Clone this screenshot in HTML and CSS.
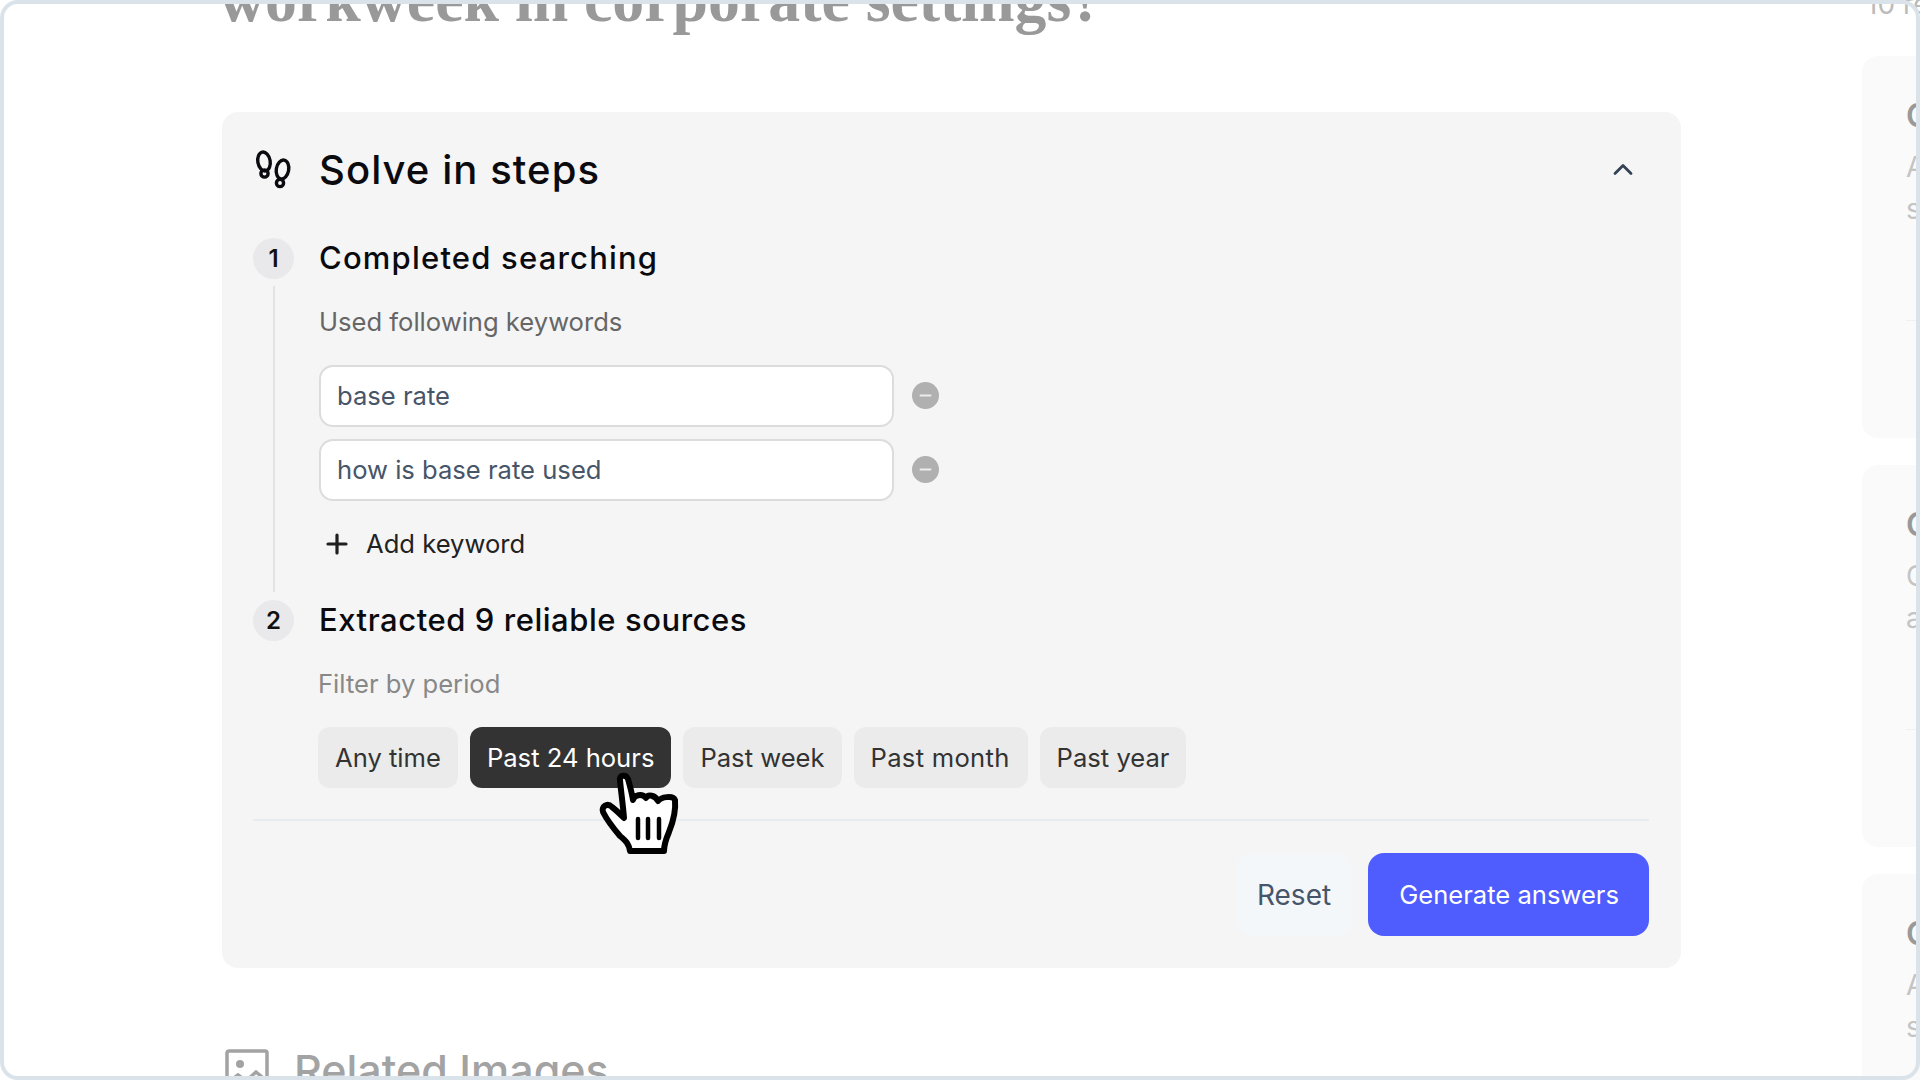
FILE: index.html
```html
<!DOCTYPE html>
<html lang="en">
<head>
<meta charset="utf-8">
<title>Solve in steps</title>
<link rel="stylesheet" href="styles.css">
</head>
<body>
<div class="page">
  <main class="main">
    <h1 class="question">workweek in corporate settings?</h1>
    <section class="card">
      <header class="card-head">
        <svg class="steps-icon" viewBox="0 0 40 40" fill="none" stroke="#0b0b0f" stroke-width="3.400">
          <ellipse cx="11" cy="12.500" rx="6.200" ry="9.500" transform="rotate(-10 11 12.500)"/>
          <circle cx="11.500" cy="24.500" r="3.600"/>
          <ellipse cx="29.500" cy="20.500" rx="6.200" ry="9.500" transform="rotate(10 29.500 20.500)"/>
          <circle cx="27" cy="34" r="3.600"/>
        </svg>
        <h2 class="card-title">Solve in steps</h2>
        <svg class="chevron" viewBox="0 0 22 22" fill="none" stroke="#334155" stroke-width="2.800" stroke-linecap="round" stroke-linejoin="round"><path d="M3 15.500l8-8 8 8"/></svg>
      </header>

      <div class="step step-first">
        <div class="rail"><span class="num">1</span><span class="line"></span></div>
        <div class="step-body">
          <h3 class="step-title step-title-wide">Completed searching</h3>
          <p class="sub">Used following keywords</p>
          <div class="keywords">
            <div class="kw-row">
              <div class="kw-input">base rate</div>
              <svg class="minus" viewBox="0 0 27 27"><circle cx="13.500" cy="13.500" r="13.500" fill="#b0b0b0"/><path d="M8.500 13.500h10" stroke="#ececec" stroke-width="2" stroke-linecap="round"/></svg>
            </div>
            <div class="kw-row">
              <div class="kw-input">how is base rate used</div>
              <svg class="minus" viewBox="0 0 27 27"><circle cx="13.500" cy="13.500" r="13.500" fill="#b0b0b0"/><path d="M8.500 13.500h10" stroke="#ececec" stroke-width="2" stroke-linecap="round"/></svg>
            </div>
          </div>
          <div class="add">
            <svg class="plus" viewBox="0 0 22 22" fill="none" stroke="#1f1f1f" stroke-width="3.200" stroke-linecap="round"><path d="M11 2v18M2 11h18"/></svg>
            <span class="add-label">Add keyword</span>
          </div>
        </div>
      </div>

      <div class="step">
        <div class="rail"><span class="num">2</span></div>
        <div class="step-body">
          <h3 class="step-title">Extracted 9 reliable sources</h3>
          <p class="sub sub-muted">Filter by period</p>
          <div class="chips">
            <span class="chip">Any time</span>
            <span class="chip chip-active">Past 24 hours</span>
            <span class="chip">Past week</span>
            <span class="chip chip-month">Past month</span>
            <span class="chip">Past year</span>
          </div>
        </div>
      </div>

      <hr class="divider">
      <footer class="actions">
        <button class="btn btn-reset">Reset</button>
        <button class="btn btn-primary">Generate answers</button>
      </footer>
    </section>

    <div class="related">
      <svg class="img-icon" viewBox="0 0 44 44" fill="none" stroke="#a3a3a3" stroke-width="3.500"><rect x="2" y="2" width="40" height="40" rx="2"/><circle cx="15" cy="15" r="4" fill="#a3a3a3" stroke="none"/><path d="M2 34l11-8 8 6 10-9 11 9"/></svg>
      <h2 class="related-title">Related Images</h2>
    </div>
  </main>

  <aside class="side">
    <div class="side-count">10 results</div>
    <article class="side-card">
      <h4>Compressed</h4>
      <p>A compressed</p>
      <p>schedule</p>
      <hr>
    </article>
    <article class="side-card">
      <h4>Compressed</h4>
      <p>Compressed</p>
      <p>allow</p>
      <hr>
    </article>
    <article class="side-card">
      <h4>Compressed</h4>
      <p>A compressed</p>
      <p>schedule</p>
    </article>
  </aside>
</div>

<svg class="cursor" viewBox="0 0 160 150">
  <path d="M60 70C59 65 66 64 68 69C70 76 72 84 73 90C74 85 82 83 86 88C88 84 95 85 98 91C101 87 113 85 115 90C116 100 113 112 109 122C106 129 104 134 104 141L70 141C69 134 66 131 60 126C54 119 47 110 43 102C41 97 47 92 52 97C56 100 60 104 64 108C63 95 61 82 60 70Z" fill="#fff" stroke="#000" stroke-width="6" stroke-linejoin="round"/>
  <path d="M78 109v19M88 109v19M99 109v19" stroke="#000" stroke-width="4.500" stroke-linecap="round"/>
</svg>
<div class="frame"></div>
</body>
</html>
```
FILE: styles.css
```css
* { box-sizing: border-box; }
html, body { margin: 0; height: 100%; background: #fff; overflow: hidden; }
body { font-family: "Inter", "Liberation Sans", sans-serif; }

.page { display: flex; height: 1080px; overflow: hidden; padding-left: 222px; }
.main { width: 1459px; flex: none; }

.question {
  margin: -36px 0 0 -3px;
  height: 148px;
  font-family: "Liberation Serif", serif;
  font-weight: 700;
  font-size: 63.8px;
  line-height: 72px;
  color: #999;
  white-space: nowrap;
}

.card { background: #f5f5f5; border-radius: 16px; padding: 32px 32px 32px 31px; height: 856px; }
.card-head { display: flex; align-items: center; height: 50px; }
.steps-icon { width: 40px; height: 40px; flex: none; margin-right: 26px; }
.card-title { margin: 0; font-size: 40px; font-weight: 500; color: #0b0b0f; flex: 1; letter-spacing: 1.07px; }
.chevron { width: 22px; height: 22px; margin-right: 15px; }

.step { display: grid; grid-template-columns: 41px 1fr; column-gap: 25px; }
.step-first { margin-top: 44px; }
.rail { display: flex; flex-direction: column; align-items: center; }
.num { width: 41px; height: 41px; flex: none; border-radius: 50%; background: #e9e9eb; display: flex; align-items: center; justify-content: center; font-size: 24px; font-weight: 600; color: #111; }
.line { flex: 1; width: 2px; background: #e3e3e3; margin: 7px 0 8px; }

.step-body { min-width: 0; }
.step-title { margin: 0; padding-bottom: 2px; font-size: 31px; line-height: 39px; font-weight: 500; color: #0b0b0f; letter-spacing: 0.55px; }
.step-title-wide { letter-spacing: 1.2px; }
.sub { margin: 25px 0 0; font-size: 25.6px; line-height: 36px; color: #666; }
.sub-muted { color: #888; margin-left: -1px; }

.keywords { margin-top: 25px; display: flex; flex-direction: column; gap: 12px; }
.kw-row { display: flex; align-items: center; gap: 18px; }
.kw-input { width: 575px; height: 62px; background: #fff; border: 2px solid #dcdcdc; border-radius: 14px; padding: 0 16px 2px; display: flex; align-items: center; font-size: 25.6px; color: #475569; }
.minus { width: 27px; height: 27px; flex: none; position: relative; top: -1px; }

.add { margin-top: 25px; height: 36px; padding: 0 0 0 7px; display: flex; align-items: center; gap: 18px; font-size: 25.6px; color: #222; margin-bottom: 38px; }
.add-label { padding-bottom: 2px; }
.plus { width: 22px; height: 22px; flex: none; }

.chips { margin: 25px 0 0 -1px; display: flex; gap: 12px; }
.chip { height: 61px; display: flex; align-items: center; padding: 0 17px; background: #ebebeb; border-radius: 12px; font-size: 25.6px; color: #333; }
.chip-active { background: #333; color: #fff; }
.chip-month { letter-spacing: 0.28px; padding-right: 18px; }

.divider { margin: 31px 0 0; border: 0; height: 2px; background: #e8ecef; }
.actions { margin-top: 32px; display: flex; justify-content: flex-end; gap: 16px; }
.btn { height: 83px; border: 0; border-radius: 16px; font-family: inherit; }
.btn-reset { background: #f4f7fa; color: #475569; font-size: 28px; padding: 0 21px; }
.btn-primary { background: #4f5dff; color: #fff; font-size: 25.6px; padding: 0 30px 0 31px; }

.related { display: flex; gap: 25px; margin: 81px 0 0 3px; align-items: flex-start; }
.img-icon { width: 44px; height: 44px; flex: none; }
.related-title { margin: -3px 0 0; font-size: 43px; line-height: 48px; font-weight: 500; color: #a3a3a3; }

.side { margin-left: 181px; width: 400px; flex: none; position: relative; display: flex; flex-direction: column; gap: 27px; padding-top: 56px; }
.side-count { position: absolute; left: 4px; top: -11px; font-size: 28px; line-height: 30px; color: #bbb; white-space: nowrap; }
.side-card { height: 382px; background: #fafafa; border-radius: 16px; padding: 41px 44px; flex: none; }
.side-card h4 { margin: 0; font-size: 32px; line-height: 38px; font-weight: 600; color: #999; white-space: nowrap; }
.side-card p { margin: 0; font-size: 28px; line-height: 42px; color: #c4c4c4; white-space: nowrap; }
.side-card p:first-of-type { margin-top: 11px; }
.side-card hr { margin: 90px 0 0; border: 0; height: 1px; background: #f0f0f0; }

.cursor { position: absolute; left: 560px; top: 710px; width: 160px; height: 150px; }
.frame { position: absolute; inset: 0; border: 4px solid #dbe3ea; border-radius: 18px; pointer-events: none; }
```
